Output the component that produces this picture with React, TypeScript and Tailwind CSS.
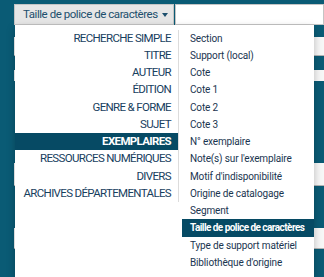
import React from "react";

const leftItems = [
  "RECHERCHE SIMPLE",
  "TITRE",
  "AUTEUR",
  "ÉDITION",
  "GENRE & FORME",
  "SUJET",
  "EXEMPLAIRES",
  "RESSOURCES NUMÉRIQUES",
  "DIVERS",
  "ARCHIVES DÉPARTEMENTALES",
];

const rightItems = [
  "Section",
  "Support (local)",
  "Cote",
  "Cote 1",
  "Cote 2",
  "Cote 3",
  "N° exemplaire",
  "Note(s) sur l'exemplaire",
  "Motif d'indisponibilité",
  "Origine de catalogage",
  "Segment",
  "Taille de police de caractères",
  "Type de support matériel",
  "Bibliothèque d'origine",
];

const App: React.FC = () => {
  return (
    <div
      className="relative h-[277px] w-[324px] overflow-hidden bg-[#0a5b75]"
      style={{ fontFamily: "Roboto, 'Liberation Sans', sans-serif" }}
    >
      {/* Search bar */}
      <div className="flex pt-[4px] pl-[14px]">
        <button className="flex h-[21px] w-[160px] items-center whitespace-nowrap border border-[#c4c4c4] bg-[#e6e6e6] pl-[8px] text-[11.5px] tracking-[-0.45px] text-[#1d4f6d]">
          Taille de police de caractères
          <span className="ml-[4px] mt-[1px] h-0 w-0 border-x-[3px] border-t-[4px] border-x-transparent border-t-[#1d4f6d]" />
        </button>
        <div className="ml-[1px] h-[21px] flex-1 border border-[#c4c4c4] bg-white" />
      </div>

      {/* Form rows behind the menu */}
      <div className="ml-[14px] flex flex-col">
        <div className="mt-[12px] h-[19px] border-b border-[#b5b5b5] bg-[#f7f7f7]" />
        <div className="mt-[14px] h-[11px] bg-[#f7f7f7]" />
        <div className="mt-[82px] h-[23px] border-b border-[#b5b5b5] bg-[#f7f7f7]" />
        <div className="mt-[42px] h-[21px] border-b border-[#b5b5b5] bg-[#f7f7f7]" />
      </div>

      {/* Dropdown menu */}
      <div className="absolute left-[15px] top-[25px] flex w-[299px] bg-white pt-[4.5px] pb-[6px] shadow-[0_3px_8px_rgba(0,0,0,0.25)]">
        <ul className="w-[164px] self-start border-r border-[#dcdcdc]">
          {leftItems.map((item) => (
            <li
              key={item}
              className={
                item === "EXEMPLAIRES"
                  ? "flex h-[17.25px] items-center justify-end whitespace-nowrap bg-[#064a64] pr-[7px] text-[11.5px] font-bold tracking-[-0.65px] text-white"
                  : "flex h-[17.25px] items-center justify-end whitespace-nowrap pr-[7px] text-[11.5px] tracking-[-0.65px] text-[#17405e]"
              }
            >
              {item}
            </li>
          ))}
        </ul>
        <ul className="ml-[3px] flex-1">
          {rightItems.map((item) => (
            <li
              key={item}
              className={
                item === "Taille de police de caractères"
                  ? "flex h-[17.25px] items-center whitespace-nowrap bg-[#064a64] pl-[8px] text-[10px] font-bold tracking-[-0.55px] text-white"
                  : "flex h-[17.25px] items-center whitespace-nowrap pl-[8px] text-[10px] tracking-[-0.15px] text-[#1a3550]"
              }
            >
              {item}
            </li>
          ))}
        </ul>
      </div>
    </div>
  );
};

export default App;
